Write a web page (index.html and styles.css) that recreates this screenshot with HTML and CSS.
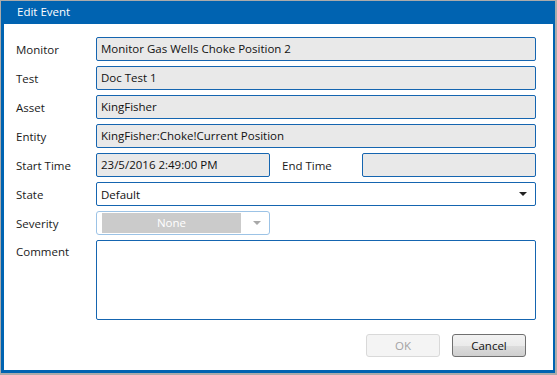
FILE: index.html
```html
<!DOCTYPE html>
<html>
  <head>
    <meta charset="UTF-8">
    <link rel="stylesheet" href="styles.css">
  </head>
  <body>
    <div class="window">
      <div class="titlebar">Edit Event</div>
      <main>
        <ul class="fields">
          <li>
            <span class="label">Monitor</span>
            <div class="input readonly">Monitor Gas Wells Choke Position 2</div>
          </li>
          <li>
            <span class="label">Test</span>
            <div class="input readonly">Doc Test 1</div>
          </li>
          <li>
            <span class="label">Asset</span>
            <div class="input readonly">KingFisher</div>
          </li>
          <li>
            <span class="label">Entity</span>
            <div class="input readonly">KingFisher:Choke!Current Position</div>
          </li>
          <li class="time-row">
            <span class="label">Start Time</span>
            <div class="input readonly">23/5/2016 2:49:00 PM</div>
            <span class="label">End Time</span>
            <div class="input readonly"></div>
          </li>
          <li>
            <span class="label">State</span>
            <div class="input select">
              <span>Default</span>
              <i class="arrow"></i>
            </div>
          </li>
          <li class="half-row">
            <span class="label">Severity</span>
            <div class="combo">
              <span class="combo-value">None</span>
              <i class="arrow light"></i>
            </div>
          </li>
          <li class="comment-row">
            <span class="label">Comment</span>
            <div class="input textarea"></div>
          </li>
        </ul>
        <div class="footer">
          <button class="btn btn-disabled" disabled>OK</button>
          <button class="btn btn-default">Cancel</button>
        </div>
      </main>
    </div>
  </body>
</html>
```

FILE: styles.css
```css
html, body {
  margin: 0;
  padding: 0;
  width: 100%;
  height: 100%;
  background: #ababab;
  font-family: "Open Sans", "Noto Sans", Arial, sans-serif;
  font-size: 11.5px;
  color: #1a1a1a;
  overflow: hidden;
}
* {
  box-sizing: border-box;
}
.window {
  width: 554px;
  height: 372px;
  margin: 1px 0 0 1px;
  background: #fff;
  border: solid #0063b1;
  border-width: 0 2px 3px 3px;
  display: flex;
  flex-direction: column;
}
.titlebar {
  height: 23px;
  margin: 0 -2px 0 -3px;
  padding: 0 0 0 16px;
  background: #0063b1;
  color: #fff;
  line-height: 22px;
  font-size: 11.5px;
}
main {
  flex: 1;
  padding: 13px 17px 13px 12px;
  display: flex;
  flex-direction: column;
}
.fields {
  margin: 0;
  padding: 0;
  display: flex;
  flex-direction: column;
  gap: 5px;
}
.fields li {
  list-style: none;
  display: grid;
  grid-template-columns: 80px 1fr;
  height: 24px;
  align-items: center;
  white-space: nowrap;
}
.fields .time-row {
  grid-template-columns: 80px 174px 12px 80px 174px;
}
.time-row .label:nth-of-type(2) {
  grid-column: 4;
}
.fields .half-row {
  grid-template-columns: 80px 174px;
}
.fields .comment-row {
  height: 80px;
  align-items: start;
}
.comment-row .label {
  padding-top: 4px;
}
.label {
  display: block;
}
.input {
  height: 24px;
  border: 1px solid #1565b0;
  border-radius: 2px;
  padding: 0 4px;
  line-height: 21px;
  color: #111;
  overflow: hidden;
}
.readonly {
  background: #e9e9e9;
}
.select {
  background: #fff;
  display: flex;
  justify-content: space-between;
  align-items: center;
  padding-right: 8px;
}
.textarea {
  height: 80px;
}
.arrow {
  width: 0;
  height: 0;
  border-left: 4px solid transparent;
  border-right: 4px solid transparent;
  border-top: 4px solid #222;
}
.arrow.light {
  border-top-color: #a8a8a8;
}
.combo {
  height: 24px;
  border: 1px solid #9cc3e6;
  border-radius: 3px;
  background: #fff;
  display: flex;
  align-items: center;
  padding: 0 8px 0 5px;
  gap: 12px;
}
.combo-value {
  width: 140px;
  height: 20px;
  line-height: 19px;
  background: #cbcbcb;
  color: #fff;
  text-align: center;
}
.footer {
  margin-top: 14px;
  display: flex;
  justify-content: flex-end;
  gap: 12px;
  padding-right: 10px;
}
.btn {
  width: 74px;
  height: 23px;
  padding: 0;
  font-family: inherit;
  font-size: 11.5px;
  border-radius: 3px;
  border: 1px solid #707070;
}
.btn-disabled {
  background: #f4f4f4;
  border-color: #d9d9d9;
  color: #a3a3a3;
}
.btn-default {
  background: linear-gradient(#f2f2f2, #ebebeb 50%, #dddddd 51%, #cfcfcf);
  color: #111;
}
```
